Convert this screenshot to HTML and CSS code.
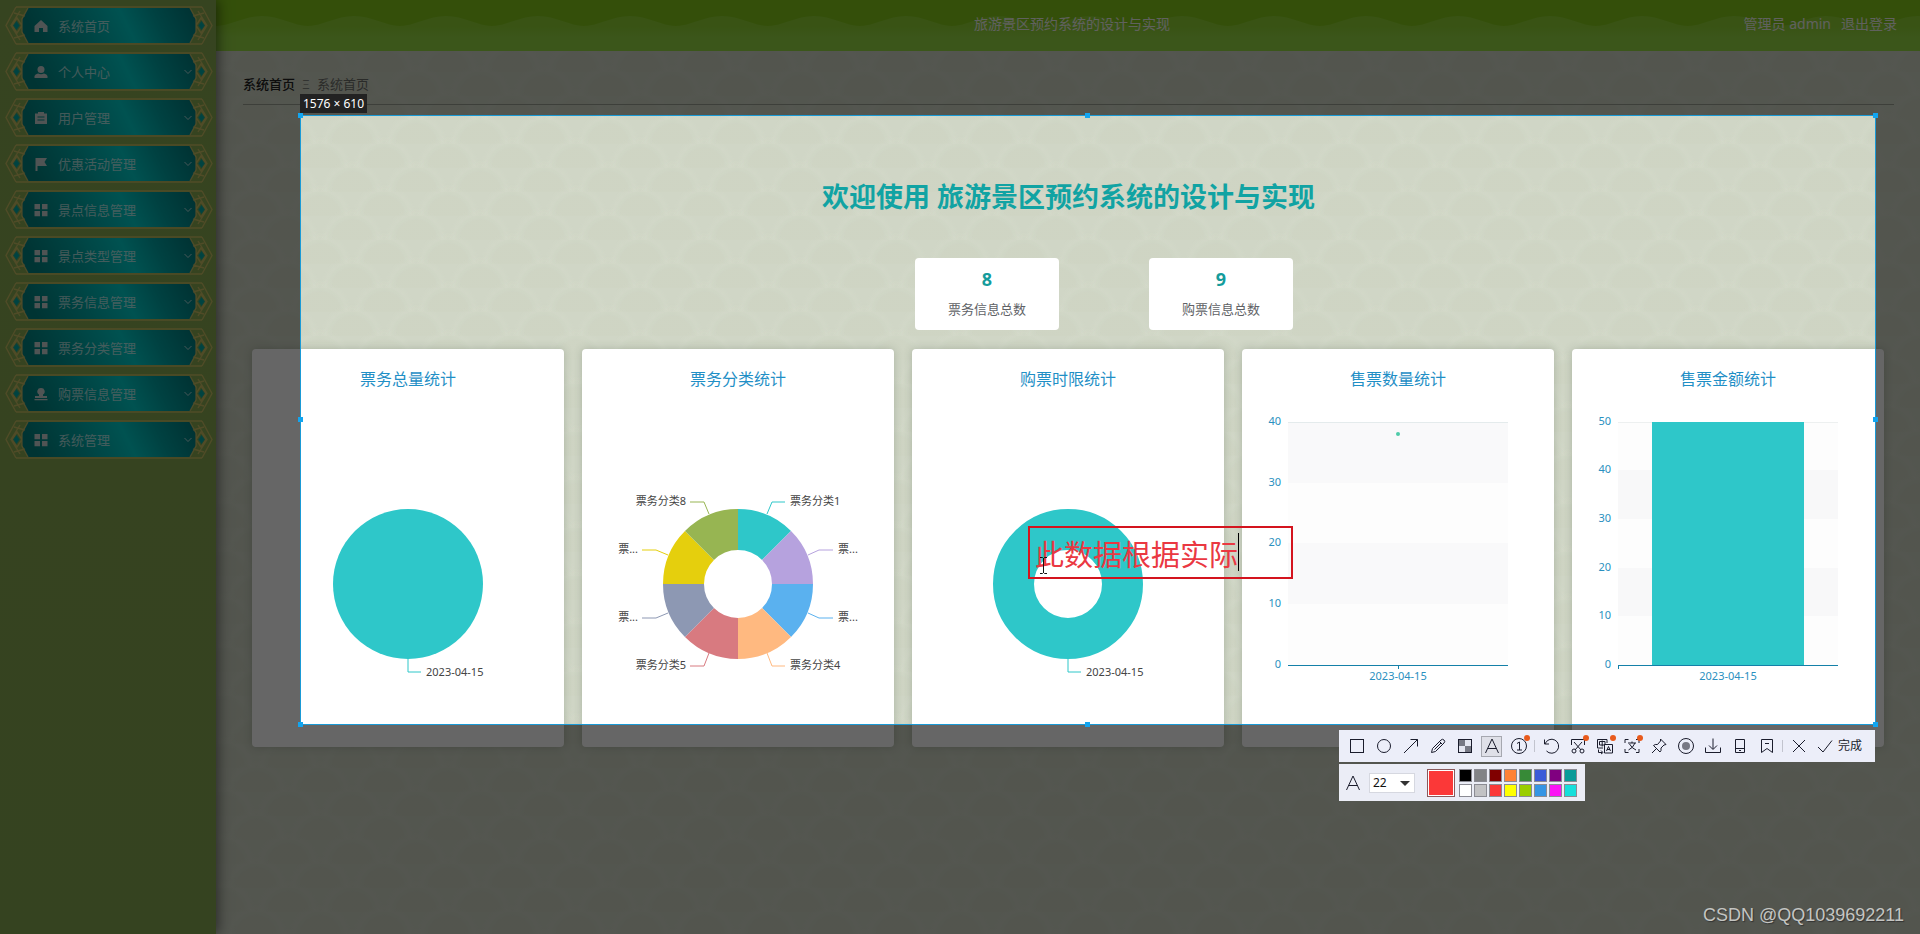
FILE: index.html
```html
<!DOCTYPE html>
<html lang="zh-CN">
<head>
<meta charset="utf-8">
<title>旅游景区预约系统的设计与实现</title>
<link rel="stylesheet" href="styles.css">
</head>
<body>
<svg class="defs" aria-hidden="true">
  <defs>
    <linearGradient id="teal" x1="0" y1="0.1" x2="1" y2="0">
      <stop offset="0" stop-color="#008280"/><stop offset="0.3" stop-color="#00a8a6"/><stop offset="0.56" stop-color="#00cdca"/><stop offset="0.75" stop-color="#00a4a4"/><stop offset="1" stop-color="#007a7c"/>
    </linearGradient>
    <linearGradient id="fade" x1="0" y1="0" x2="0" y2="1">
      <stop offset="0.3" stop-color="#8ed033"/><stop offset="0.6" stop-color="#94d642"/>
    </linearGradient>
    <pattern id="waves" width="92" height="51" patternUnits="userSpaceOnUse">
      <path d="M0 26C14 26 28 16 46 16S78 26 92 26V51H0Z" fill="url(#fade)"/>
    </pattern>
  </defs>
  <symbol id="frame" viewBox="0 0 208 39">
    <path d="M23 2H185L191 14V25L185 37H23L17 25V14Z" fill="url(#teal)"/>
    <g fill="none" stroke="#dcc369" stroke-opacity=".75" stroke-width="1.4">
      <path d="M11 1H197M11 38H197"/>
      <g id="end"><path d="M11 1L1 19.500L11 38M23 2L17 13V26L23 37M15 5L6 19.500L15 34M12 12L17 19.500L12 27L7 19.500ZM9 7L20 10M9 32L20 29"/><path d="M11.500 16L14 19.500L11.500 23L9 19.500Z" fill="#00a8a4" stroke="#00a8a4"/></g>
      <use href="#end" transform="translate(208 0) scale(-1 1)"/>
    </g>
  </symbol>
  <symbol id="home" viewBox="0 0 14 14"><path d="M7 1L.5 7V13H5V9H9V13H13.500V7Z"/></symbol>
  <symbol id="user" viewBox="0 0 14 14"><circle cx="7" cy="4.500" r="3.500"/><path d="M.5 13V11Q1 9 4 8.500Q7 10 10 8.500Q13 9 13.500 11V13Z"/></symbol>
  <symbol id="board" viewBox="0 0 14 14"><path fill-rule="evenodd" d="M1 2.500H4V1H10V2.500H13V13H1ZM3.500 5.500V6.500H10.500V5.500ZM3.500 8.500V9.500H10.500V8.500Z"/></symbol>
  <symbol id="flag" viewBox="0 0 14 14"><path d="M1.500 1H13L10.500 5L13 9H3.500V14H1.500Z"/></symbol>
  <symbol id="grid" viewBox="0 0 14 14"><path d="M.5 1H6V6.300H.5ZM8 1H13.500V6.300H8ZM.5 8H6V13.300H.5ZM8 8H13.500V13.300H8Z"/></symbol>
  <symbol id="stamp" viewBox="0 0 14 14"><path d="M7 1A3.500 3.500 0 0 1 9 7.500V9H13V11H1V9H5V7.500A3.500 3.500 0 0 1 7 1ZM.5 12H13.500V13.300H.5Z"/></symbol>
  <symbol id="chev" viewBox="0 0 8 6"><path d="M.5 1L4 4.500L7.500 1" fill="none" stroke="currentColor"/></symbol>
</svg>

<div class="app">
  <nav class="sidebar" aria-label="主菜单">
    <a class="item" href="#"><svg class="frame"><use href="#frame"/></svg><svg class="ico"><use href="#home"/></svg><span>系统首页</span></a>
    <a class="item" href="#"><svg class="frame"><use href="#frame"/></svg><svg class="ico"><use href="#user"/></svg><span>个人中心</span><svg class="chev"><use href="#chev"/></svg></a>
    <a class="item" href="#"><svg class="frame"><use href="#frame"/></svg><svg class="ico"><use href="#board"/></svg><span>用户管理</span><svg class="chev"><use href="#chev"/></svg></a>
    <a class="item" href="#"><svg class="frame"><use href="#frame"/></svg><svg class="ico"><use href="#flag"/></svg><span>优惠活动管理</span><svg class="chev"><use href="#chev"/></svg></a>
    <a class="item" href="#"><svg class="frame"><use href="#frame"/></svg><svg class="ico"><use href="#grid"/></svg><span>景点信息管理</span><svg class="chev"><use href="#chev"/></svg></a>
    <a class="item" href="#"><svg class="frame"><use href="#frame"/></svg><svg class="ico"><use href="#grid"/></svg><span>景点类型管理</span><svg class="chev"><use href="#chev"/></svg></a>
    <a class="item" href="#"><svg class="frame"><use href="#frame"/></svg><svg class="ico"><use href="#grid"/></svg><span>票务信息管理</span><svg class="chev"><use href="#chev"/></svg></a>
    <a class="item" href="#"><svg class="frame"><use href="#frame"/></svg><svg class="ico"><use href="#grid"/></svg><span>票务分类管理</span><svg class="chev"><use href="#chev"/></svg></a>
    <a class="item" href="#"><svg class="frame"><use href="#frame"/></svg><svg class="ico"><use href="#stamp"/></svg><span>购票信息管理</span><svg class="chev"><use href="#chev"/></svg></a>
    <a class="item" href="#"><svg class="frame"><use href="#frame"/></svg><svg class="ico"><use href="#grid"/></svg><span>系统管理</span><svg class="chev"><use href="#chev"/></svg></a>
  </nav>

  <div class="page">
    <header class="topbar">
      <svg class="waves" aria-hidden="true"><rect width="100%" height="51" fill="url(#waves)"/></svg>
      <div class="brand">旅游景区预约系统的设计与实现</div>
      <div class="account"><span>管理员 admin</span><a href="#">退出登录</a></div>
    </header>

    <main class="content">
      <div class="crumbs"><strong>系统首页</strong><span class="sep">Ξ</span><span>系统首页</span></div>
      <h1>欢迎使用 旅游景区预约系统的设计与实现</h1>
      <div class="stats">
        <div class="stat"><b>8</b><span>票务信息总数</span></div>
        <div class="stat"><b>9</b><span>购票信息总数</span></div>
      </div>
      <div class="charts">
        <section class="card"><h2>票务总量统计</h2>
          <svg viewBox="0 0 312 348" class="plot">
            <circle cx="156" cy="185" r="75" fill="#2ec7c9"/>
            <path d="M156 260V273H169" class="lead" stroke="#2ec7c9"/>
            <text x="174" y="277">2023-04-15</text>
          </svg>
        </section>
        <section class="card"><h2>票务分类统计</h2>
          <svg viewBox="0 0 312 348" class="plot">
            <g transform="translate(156 185)">
              <path d="M0 -75A75 75 0 0 1 53.030 -53.030L24.040 -24.040A34 34 0 0 0 0 -34Z" fill="#2ec7c9"/>
              <path transform="rotate(45)" d="M0 -75A75 75 0 0 1 53.030 -53.030L24.040 -24.040A34 34 0 0 0 0 -34Z" fill="#b6a2de"/>
              <path transform="rotate(90)" d="M0 -75A75 75 0 0 1 53.030 -53.030L24.040 -24.040A34 34 0 0 0 0 -34Z" fill="#5ab1ef"/>
              <path transform="rotate(135)" d="M0 -75A75 75 0 0 1 53.030 -53.030L24.040 -24.040A34 34 0 0 0 0 -34Z" fill="#ffb980"/>
              <path transform="rotate(180)" d="M0 -75A75 75 0 0 1 53.030 -53.030L24.040 -24.040A34 34 0 0 0 0 -34Z" fill="#d87a80"/>
              <path transform="rotate(225)" d="M0 -75A75 75 0 0 1 53.030 -53.030L24.040 -24.040A34 34 0 0 0 0 -34Z" fill="#8d98b3"/>
              <path transform="rotate(270)" d="M0 -75A75 75 0 0 1 53.030 -53.030L24.040 -24.040A34 34 0 0 0 0 -34Z" fill="#e5cf0d"/>
              <path transform="rotate(315)" d="M0 -75A75 75 0 0 1 53.030 -53.030L24.040 -24.040A34 34 0 0 0 0 -34Z" fill="#97b552"/>
            </g>
            <g class="lead">
              <path d="M185 115L190 103H203" stroke="#2ec7c9"/>
              <path d="M226 156L237 151H251" stroke="#b6a2de"/>
              <path d="M226 214L237 219H251" stroke="#5ab1ef"/>
              <path d="M185 254L190 267H203" stroke="#ffb980"/>
              <path d="M127 254L122 267H108" stroke="#d87a80"/>
              <path d="M86 214L74 219H60" stroke="#8d98b3"/>
              <path d="M86 156L74 151H60" stroke="#e5cf0d"/>
              <path d="M127 115L122 103H108" stroke="#97b552"/>
            </g>
            <text x="208" y="106">票务分类1</text><text x="256" y="154">票...</text>
            <text x="256" y="222">票...</text><text x="208" y="270">票务分类4</text>
            <g text-anchor="end"><text x="104" y="106">票务分类8</text><text x="56" y="154">票...</text>
            <text x="56" y="222">票...</text><text x="104" y="270">票务分类5</text></g>
          </svg>
        </section>
        <section class="card"><h2>购票时限统计</h2>
          <svg viewBox="0 0 312 348" class="plot">
            <circle cx="156" cy="185" r="54.500" fill="none" stroke="#2ec7c9" stroke-width="41"/>
            <path d="M156 260V273H169" class="lead" stroke="#2ec7c9"/>
            <text x="174" y="277">2023-04-15</text>
          </svg>
        </section>
        <section class="card"><h2>售票数量统计</h2>
          <svg viewBox="0 0 312 348" class="plot axis">
            <path d="M46 23H266V84H46ZM46 144H266V205H46Z" fill="#f9f9fa"/>
            <path d="M46 84H266V144H46ZM46 205H266V266H46Z" fill="#fdfdfd"/>
            <path d="M46 23.500H266" stroke="#e4ebec"/>
            <path d="M46 266.500H266M156.500 267V270" stroke="#1480a8"/>
            <circle cx="156" cy="35" r="2" fill="#4fcba8"/>
            <g text-anchor="end"><text x="39" y="26">40</text><text x="39" y="87">30</text><text x="39" y="147">20</text><text x="39" y="208">10</text><text x="39" y="269">0</text></g>
            <text x="156" y="281" text-anchor="middle">2023-04-15</text>
          </svg>
        </section>
        <section class="card"><h2>售票金额统计</h2>
          <svg viewBox="0 0 312 348" class="plot axis">
            <path d="M46 71H266V120H46ZM46 169H266V217H46Z" fill="#f8f8f9"/>
            <path d="M46 23H266V71H46ZM46 120H266V169H46ZM46 217H266V266H46Z" fill="#fdfdfd"/>
            <path d="M46 23.500H266" stroke="#edf0f0"/>
            <rect x="80" y="23" width="152" height="243" fill="#2ec7c9"/>
            <path d="M46 266.500H266M46.500 267V270" stroke="#1480a8"/>
            <g text-anchor="end"><text x="39" y="26">50</text><text x="39" y="74">40</text><text x="39" y="123">30</text><text x="39" y="172">20</text><text x="39" y="220">10</text><text x="39" y="269">0</text></g>
            <text x="156" y="281" text-anchor="middle">2023-04-15</text>
          </svg>
        </section>
      </div>
    </main>
  </div>
</div>

<div class="capture">
  <div class="region">
    <i class="h nw"></i><i class="h n"></i><i class="h ne"></i><i class="h w"></i><i class="h e"></i><i class="h sw"></i><i class="h s"></i><i class="h se"></i>
  </div>
  <div class="size">1576 × 610</div>
  <div class="note"><input class="note-text" aria-label="标注文字" value="此数据根据实际"><i class="caret"></i>
    <svg class="ibeam" viewBox="0 0 7 17"><path d="M0 .5H2.500L3.500 1.500L4.500 .5H7M3.500 1V16M0 16.500H2.500L3.500 15.500L4.500 16.500H7" fill="none" stroke="#111"/></svg>
  </div>
  <div class="tools">
    <div class="bar">
      <button aria-label="矩形"><svg viewBox="0 0 20 20"><rect x="3.500" y="3.500" width="13" height="13"/></svg></button>
      <button aria-label="椭圆"><svg viewBox="0 0 20 20"><circle cx="10" cy="10" r="6.500"/></svg></button>
      <button aria-label="箭头"><svg viewBox="0 0 20 20"><path d="M3 17L16.500 3.500M9.500 3.500H16.500V10.500"/></svg></button>
      <button aria-label="画笔"><svg viewBox="0 0 20 20"><path d="M3.500 16.500L4.500 12.500L13 4Q14.500 2.500 16 4T16 7L7.500 15.500ZM11.500 5.500L14.500 8.500M13 7L6.500 13.500"/></svg></button>
      <button aria-label="马赛克"><svg viewBox="0 0 20 20"><path d="M4 4H10V10H4ZM10 10H16V16H10Z" fill="#777984" stroke="none"/><path d="M10 4H16V10H10ZM4 10H10V16H4Z" fill="#e4e6f0" stroke="none"/><rect x="3.500" y="3.500" width="13" height="13"/></svg></button>
      <button aria-label="文字" class="on"><svg viewBox="0 0 20 20"><path d="M3.500 17L10 3L16.500 17M5.500 12.500H14.500"/></svg></button>
      <button aria-label="序号" class="new"><svg viewBox="0 0 20 20"><circle cx="10" cy="10" r="7.500"/><path d="M8 7.500L10.500 6V14M8 14H13"/></svg></button>
      <span class="div"></span>
      <button aria-label="撤销"><svg viewBox="0 0 20 20"><path d="M3.500 3.500V8H8M4 8A7 7 0 1 1 5.500 15"/></svg></button>
      <button aria-label="裁剪" class="new"><svg viewBox="0 0 20 20"><path d="M3.500 9V3.500H16.500V9M6 6L13 14M14 6L7 14"/><circle cx="6" cy="15" r="2"/><circle cx="14" cy="15" r="2"/></svg></button>
      <button aria-label="翻译" class="new"><svg viewBox="0 0 20 20"><path d="M12 7V3.500H2.500V12H8M4.500 5.500H10V9H4.500ZM7.200 4.500V10.500M9.500 8.500H17.500V17H9.500ZM11.500 15L13.500 10.500L15.500 15M12 13.500H15M3.500 13.500V16.500H7M6 14.500L8 16.500L6 18"/></svg></button>
      <button aria-label="识别文字" class="new"><svg viewBox="0 0 20 20"><path d="M3 7V3.500H6.500M14 3.500H17V7M3 13V16.500H6.500M14 16.500H17V13M6 7H14M10 5.500V7M13 7Q11 12 6.500 14M7.500 8Q10 12.500 14 14"/></svg></button>
      <button aria-label="钉住"><svg viewBox="0 0 20 20"><path d="M11.500 3L17 8.500L15 9L12 12Q12.500 15 11 16L4.500 9.500Q6 8 8.500 8.500L11.500 5ZM7.500 12.500L3 17"/></svg></button>
      <button aria-label="录制"><svg viewBox="0 0 20 20"><circle cx="10" cy="10" r="7.500"/><circle cx="10" cy="10" r="4" fill="#777984" stroke="none"/></svg></button>
      <button aria-label="下载"><svg viewBox="0 0 20 20"><path d="M10 2.500V13M6 9.500L10 13.500L14 9.500M2.500 11.500V16.500H17.500V11.500"/></svg></button>
      <button aria-label="发送到手机"><svg viewBox="0 0 20 20"><path d="M5.500 3.500H14.500V16.500H5.500ZM5.500 12.500H14.500M9 14.500H11"/></svg></button>
      <button aria-label="收藏"><svg viewBox="0 0 20 20"><path d="M4.500 3.500H15.500V16.500L10 12.500L4.500 16.500ZM8 7.500H12"/></svg></button>
      <span class="div"></span>
      <button aria-label="取消"><svg viewBox="0 0 20 20"><path d="M4 4L16 16M16 4L4 16"/></svg></button>
      <button class="done"><svg viewBox="0 0 20 20"><path d="M3 11L8 16L17 4.500"/></svg>完成</button>
    </div>
    <div class="bar opts">
      <svg class="big-a" viewBox="0 0 20 20"><path d="M3.500 17L10 3L16.500 17M5.500 12.500H14.500"/></svg>
      <span class="pick"><select aria-label="字号"><option>22</option></select></span>
      <button class="cur" aria-label="当前颜色"></button>
      <div class="palette">
        <button class="c-black" aria-label="黑"></button><button class="c-gray" aria-label="灰"></button><button class="c-maroon" aria-label="深红"></button><button class="c-orange" aria-label="橙"></button><button class="c-green" aria-label="绿"></button><button class="c-blue" aria-label="蓝"></button><button class="c-purple" aria-label="紫"></button><button class="c-teal" aria-label="青"></button>
        <button class="c-white" aria-label="白"></button><button class="c-silver" aria-label="银"></button><button class="c-red" aria-label="红"></button><button class="c-yellow" aria-label="黄"></button><button class="c-lime" aria-label="黄绿"></button><button class="c-sky" aria-label="天蓝"></button><button class="c-pink" aria-label="品红"></button><button class="c-cyan" aria-label="浅青"></button>
      </div>
    </div>
  </div>
</div>
<div class="watermark">CSDN @QQ1039692211</div>
</body>
</html>
```
FILE: styles.css
```css
* { box-sizing: border-box; }
body {
  margin: 0;
  overflow: hidden;
  position: relative;
  font: 13px/20px "Noto Sans", "Noto Sans CJK SC", sans-serif;
  color: #333;
}
a { color: inherit; text-decoration: none; }
button { padding: 0; border: 0; background: none; font: inherit; color: inherit; }
.defs { position: absolute; width: 0; height: 0; }

.app {
  display: flex;
  min-height: 100vh;
  background:
    radial-gradient(circle at 50% 100%, rgba(190, 200, 175, .08) 0 20px, rgba(222, 228, 212, .1) 26px, transparent 32px) 0 0 / 64px 48px,
    radial-gradient(circle at 50% 100%, rgba(190, 200, 175, .08) 0 20px, rgba(222, 228, 212, .1) 26px, transparent 32px) 32px 24px / 64px 48px,
    #d0d6c6;
}

.sidebar {
  position: relative;
  z-index: 1;
  flex: 0 0 216px;
  display: flex;
  flex-direction: column;
  gap: 7px;
  padding: 6px 3px 0 5px;
  background: linear-gradient(#88aa50, #86a850);
  box-shadow: 2px 0 12px rgba(0, 0, 0, .5);
}
.item {
  position: relative;
  display: flex;
  align-items: center;
  height: 39px;
  padding: 0 13px 0 29px;
  color: rgba(255, 255, 255, .68);
}
.frame { position: absolute; inset: 0; width: 100%; height: 100%; }
.ico { position: relative; width: 14px; height: 14px; margin-right: 10px; fill: #c8d2d2; }
.item span { position: relative; flex: 1; }
.chev { position: relative; width: 8px; height: 6px; margin-right: 8px; }

.page { flex: 1; min-width: 0; }
.topbar {
  position: relative;
  display: flex;
  justify-content: flex-end;
  align-items: center;
  height: 51px;
  padding: 0 23px 4px;
  background: #82c61a;
  color: #f0f2ec;
  font-size: 14px;
}
.waves { position: absolute; inset: 0; width: 100%; height: 51px; }
.brand { position: absolute; left: 0; right: 0; text-align: center; padding-left: 8px; }
.account { position: relative; display: flex; gap: 10px; }

.content { padding: 0 26px 0 27px; }
.crumbs {
  display: flex;
  gap: 7px;
  padding: 23px 0 10px;
  border-bottom: 1px solid #9a9d92;
  color: #6a6c68;
}
.crumbs strong { font-weight: 500; color: #222; }
.sep { font-weight: 300; }
h1 {
  margin: 0;
  padding: 72px 0 41px;
  text-align: center;
  font-size: 27px;
  line-height: 40px;
  color: #11a3a3;
}
.stats { display: flex; justify-content: center; gap: 90px; padding-left: 71px; }
.stat {
  width: 144px;
  height: 72px;
  display: flex;
  flex-direction: column;
  align-items: center;
  gap: 10px;
  padding-top: 11px;
  border-radius: 4px;
  background: #fff;
  color: #606266;
}
.stat b { font-size: 18px; color: #159c9c; }
.charts { display: grid; grid-template-columns: repeat(5, 1fr); gap: 18px; padding: 19px 10px 0 9px; }
.card { border-radius: 4px; background: #fff; box-shadow: 0 0 8px rgba(60, 80, 60, .25); }
.card h2 {
  margin: 0;
  padding: 18px 0 8px;
  text-align: center;
  font-size: 16px;
  line-height: 24px;
  font-weight: 400;
  color: #1f8fc6;
}
.plot { display: block; width: 100%; overflow: visible; font-size: 11px; fill: #444; }
.axis { fill: #2a90c0; }
.lead { fill: none; }

.capture { position: absolute; inset: 0; z-index: 2; overflow: hidden; }
.region {
  position: absolute;
  left: 300px;
  top: 115px;
  width: 1576px;
  height: 610px;
  border: 1px solid #1a9ad6;
  box-shadow: 0 0 0 2000px rgba(0, 0, 0, .6);
}
.h { position: absolute; width: 5px; height: 5px; background: #12a5f0; }
.nw, .n, .ne { top: -3px; }
.sw, .s, .se { bottom: -3px; }
.nw, .w, .sw { left: -3px; }
.ne, .e, .se { right: -3px; }
.n, .s { left: 50%; margin-left: -3px; }
.w, .e { top: 50%; margin-top: -3px; }
.size {
  position: absolute;
  left: 300px;
  top: 94px;
  width: 67px;
  text-align: center;
  font-size: 12px;
  line-height: 19px;
  white-space: nowrap;
  background: #222;
  color: #fff;
}
.note { position: absolute; left: 1028px; top: 526px; width: 265px; height: 53px; border: 2px solid #d4141e; }
.note-text {
  width: 100%;
  height: 100%;
  padding: 0 0 0 5px;
  border: 0;
  outline: 0;
  background: transparent;
  font: 29px/44px "Noto Sans", "Noto Sans CJK SC", sans-serif;
  color: #ea3842;
}
.caret { position: absolute; left: 208px; top: 5px; width: 1px; height: 38px; background: #000; }
.ibeam { position: absolute; left: 10px; top: 29px; width: 7px; height: 17px; }

.tools { position: absolute; left: 1339px; top: 730px; display: flex; flex-direction: column; align-items: flex-start; gap: 2px; }
.bar { display: flex; align-items: center; height: 32px; width: 536px; padding: 0 4px; background: #eceef9; color: #1a1c2c; }
.bar svg { display: block; width: 20px; height: 20px; fill: none; stroke: #1a1c2c; }
.bar button { position: relative; display: flex; align-items: center; justify-content: center; width: 27px; height: 20px; }
.bar .on { width: 21px; height: 21px; margin: 0 3px; background: #dfe0e8; outline: 1px solid #a6a8b0; outline-offset: -1px; }
.bar .new::after { content: ""; position: absolute; right: 2px; top: -1px; width: 6px; height: 6px; border-radius: 50%; background: #e85a1c; }
.div { width: 1px; height: 12px; margin: 0 2px; background: #c2c4ce; }
.bar .done { width: auto; margin-left: 3px; gap: 3px; font-size: 12px; }
.bar.opts { width: 246px; height: 37px; background: #ebedf6; }
.big-a { flex: none; margin-right: 6px; }
.pick { position: relative; margin-right: 12px; }
.pick::after {
  content: "";
  position: absolute;
  right: 5px;
  top: 8px;
  border: 5px solid transparent;
  border-top-color: #333;
  border-bottom: 0;
  pointer-events: none;
}
.opts select {
  display: block;
  appearance: none;
  width: 46px;
  height: 20px;
  padding: 0 0 0 3px;
  border: 1px solid #d6d8e0;
  background: #fff;
  color: #111;
  font: 12px "Noto Sans", sans-serif;
}
.opts .cur { width: 28px; height: 28px; margin-right: 4px; border: 1px solid #8a5a5c; box-shadow: inset 0 0 0 1px #fff; background: #fb3838; }
.palette { display: grid; grid-template-columns: repeat(8, 13px); gap: 2px; }
.palette button { width: 13px; height: 13px; border: 1px solid #8b8b93; }
.palette .c-black { background: #000; }
.palette .c-gray { background: #828386; }
.palette .c-maroon { background: #800000; }
.palette .c-orange { background: #ff8236; }
.palette .c-green { background: #378a37; }
.palette .c-blue { background: #3b5bd8; }
.palette .c-purple { background: #800080; }
.palette .c-teal { background: #0a9b98; }
.palette .c-white { background: #fff; }
.palette .c-silver { background: #c2c2c4; }
.palette .c-red { background: #fb3838; }
.palette .c-yellow { background: #ffff00; }
.palette .c-lime { background: #9acd00; }
.palette .c-sky { background: #3595e4; }
.palette .c-pink { background: #fb14f4; }
.palette .c-cyan { background: #16dfdb; }

.watermark {
  position: absolute;
  z-index: 3;
  right: 16px;
  bottom: 8px;
  font: 18px/22px "Liberation Sans", sans-serif;
  color: #c4c5c2;
  text-shadow: 1px 1px 1px #333;
}
```
